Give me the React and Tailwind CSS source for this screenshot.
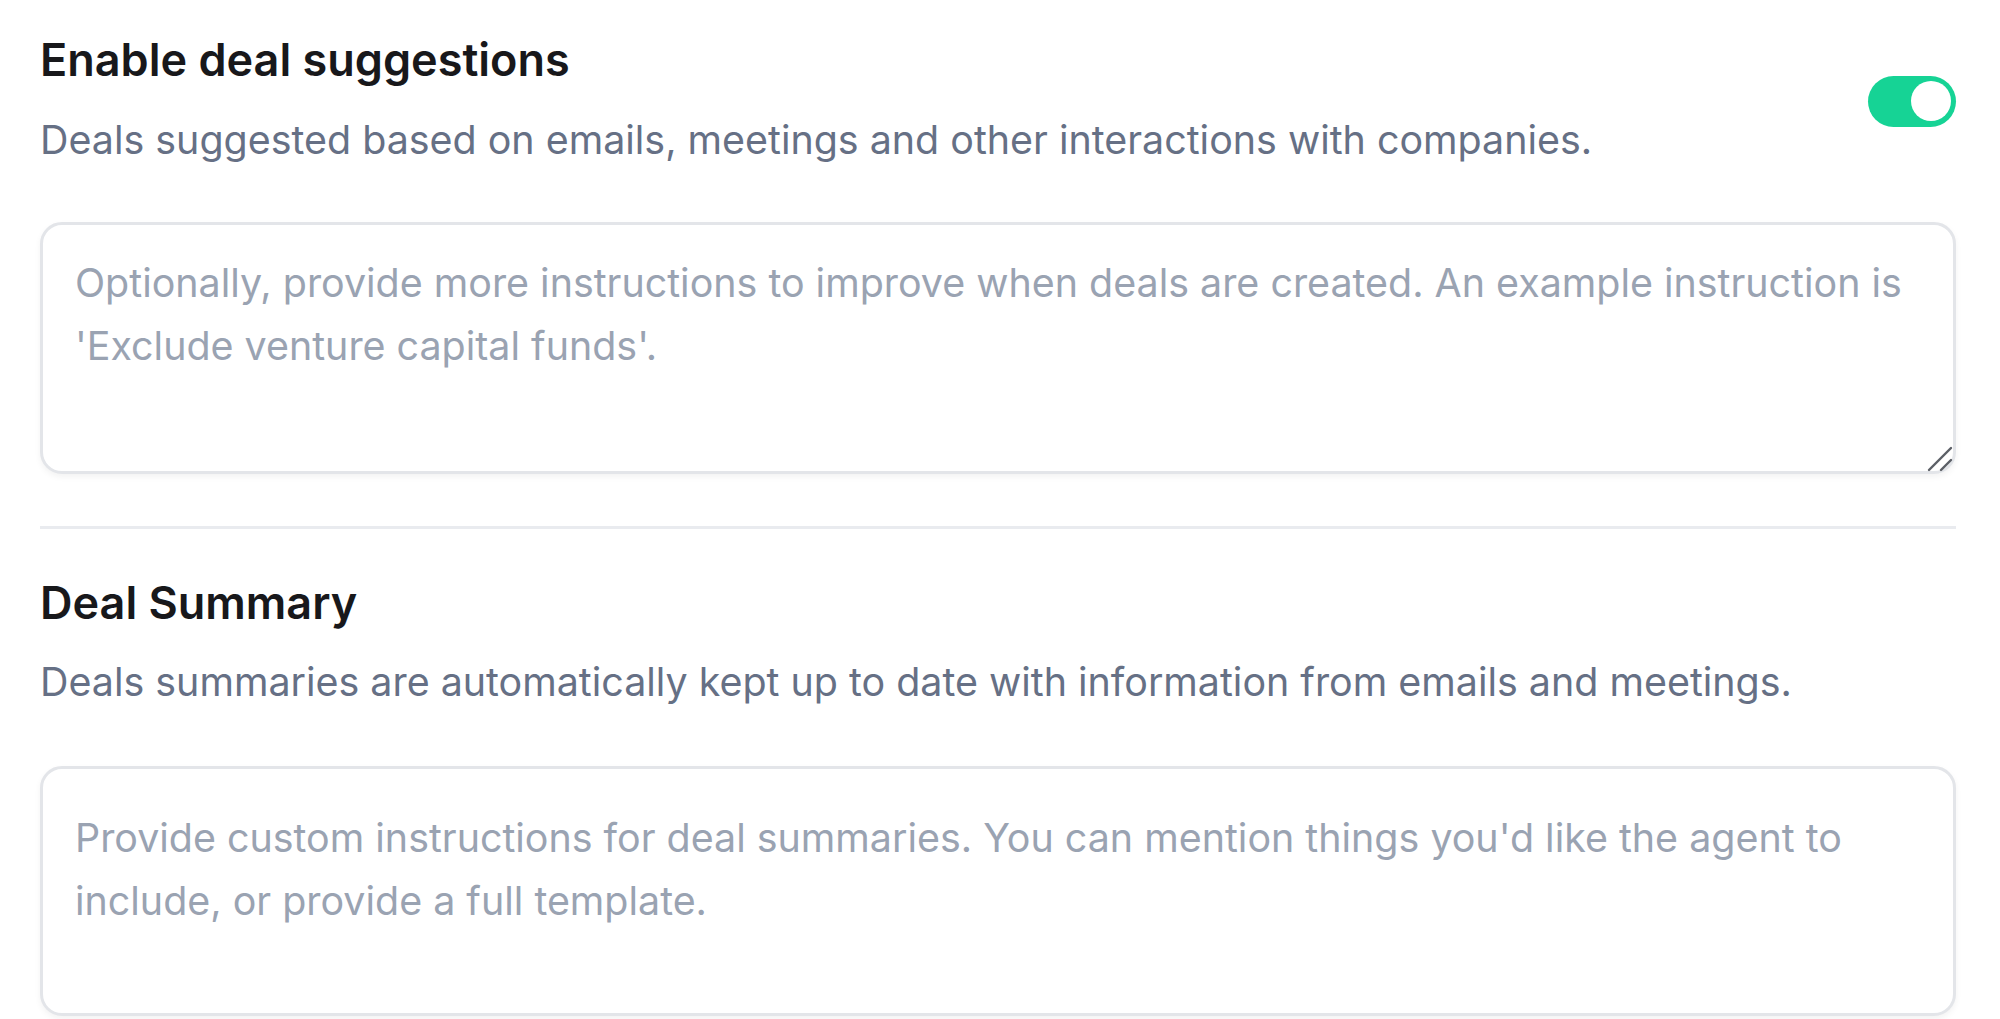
import { useState } from "react";

const ResizeGrip = () => (
  <svg
    className="pointer-events-none absolute bottom-0 right-0 h-[30px] w-[30px]"
    viewBox="0 0 30 30"
    fill="none"
    stroke="#5b5f66"
    strokeWidth="2.4"
    strokeLinecap="round"
  >
    <path d="M3 26 L25 4" />
    <path d="M15 26 L25 16" />
  </svg>
);

function Toggle({ checked, onChange }) {
  return (
    <button
      type="button"
      role="switch"
      aria-checked={checked}
      onClick={() => onChange(!checked)}
      className={`relative mt-[4px] flex h-[51px] w-[88px] shrink-0 items-center rounded-full px-[5px] ${
        checked ? "justify-end bg-[#16d395]" : "justify-start bg-[#d1d5db]"
      }`}
    >
      <span className="block h-[40px] w-[40px] rounded-full bg-white" />
    </button>
  );
}

export default function App() {
  const [enabled, setEnabled] = useState(true);

  return (
    <div
      className="min-h-screen bg-white"
      style={{ fontFamily: "Inter, 'Noto Sans', sans-serif" }}
    >
      <div className="pl-[40px] pr-[44px] pt-[30px]">
        <section>
          <div className="flex items-center justify-between gap-10">
            <div className="min-w-0">
              <h2 className="text-[45px] font-semibold leading-[60px] text-[#18181b]">
                Enable deal suggestions
              </h2>
              <p className="mt-[23px] text-[39.4px] leading-[55px] text-[#667085]">
                Deals suggested based on emails, meetings and other interactions with companies.
              </p>
            </div>
            <Toggle checked={enabled} onChange={setEnabled} />
          </div>

          <div className="relative mt-[54px]">
            <textarea
              rows={3}
              className="block h-[252px] w-full resize-none rounded-[22px] border-[3px] border-[#e3e5e9] bg-white pb-[24px] pl-[32px] pr-[8px] pt-[27px] text-[39.4px] leading-[63px] text-[#18181b] shadow-[0_3px_6px_rgba(0,0,0,0.05)] outline-none placeholder:text-[#9aa3b2]"
              placeholder={"Optionally, provide more instructions to improve when deals are created. An example instruction is\n'Exclude venture capital funds'."}
            />
            <ResizeGrip />
          </div>
        </section>

        <hr className="mb-[44px] mt-[52px] border-0 border-t-[3px] border-[#e9ebef]" />

        <section>
          <h2 className="text-[45px] font-semibold leading-[60px] text-[#18181b]">Deal Summary</h2>
          <p className="mt-[22px] text-[39.4px] leading-[55px] text-[#667085]">
            Deals summaries are automatically kept up to date with information from emails and meetings.
          </p>
          <textarea
            rows={3}
            className="mt-[56px] block h-[250px] w-full resize-none rounded-[22px] border-[3px] border-[#e3e5e9] bg-white pb-[16px] pl-[32px] pr-[8px] pt-[38px] text-[39.4px] leading-[63px] text-[#18181b] shadow-[0_3px_6px_rgba(0,0,0,0.05)] outline-none placeholder:text-[#9aa3b2]"
            placeholder="Provide custom instructions for deal summaries. You can mention things you'd like the agent to include, or provide a full template."
          />
        </section>
      </div>
    </div>
  );
}
